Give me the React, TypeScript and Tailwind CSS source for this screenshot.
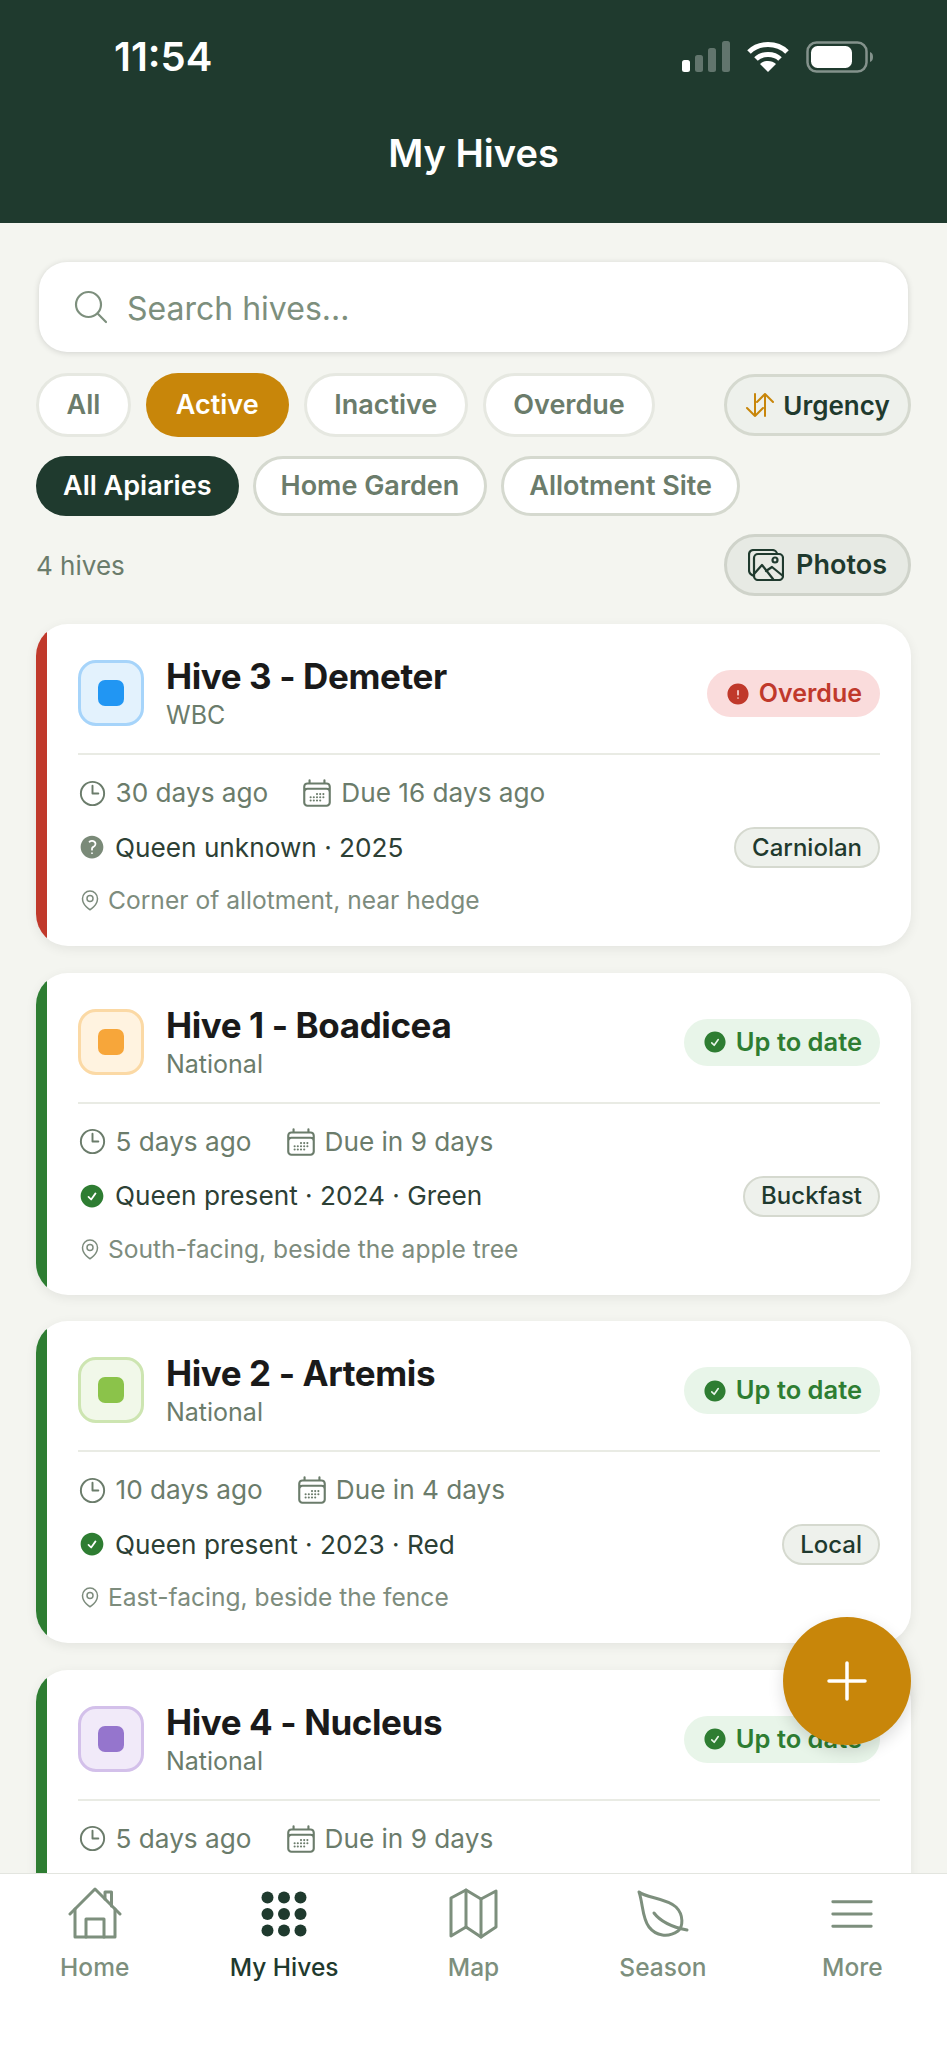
import React from 'react';
import {
  HiOutlineBars3,
  HiOutlineClock,
  HiOutlineCalendarDays,
  HiOutlineMapPin,
  HiOutlineMagnifyingGlass,
  HiCheckCircle,
  HiExclamationCircle,
  HiQuestionMarkCircle,
} from 'react-icons/hi2';

interface Hive {
  name: string;
  type: string;
  stripe: string;
  tileBg: string;
  tileBorder: string;
  tileDot: string;
  overdue: boolean;
  inspected: string;
  due: string;
  queen: string;
  queenKnown: boolean;
  breed: string;
  location: string;
}

const hives: Hive[] = [
  {
    name: 'Hive 3 - Demeter',
    type: 'WBC',
    stripe: 'bg-[#c0392b]',
    tileBg: 'bg-[#e3f2fd]',
    tileBorder: 'border-[#a6d4fa]',
    tileDot: 'bg-[#2196f3]',
    overdue: true,
    inspected: '30 days ago',
    due: 'Due 16 days ago',
    queen: 'Queen unknown · 2025',
    queenKnown: false,
    breed: 'Carniolan',
    location: 'Corner of allotment, near hedge',
  },
  {
    name: 'Hive 1 - Boadicea',
    type: 'National',
    stripe: 'bg-[#2e7d32]',
    tileBg: 'bg-[#fff3e0]',
    tileBorder: 'border-[#fbd9a5]',
    tileDot: 'bg-[#f7a63a]',
    overdue: false,
    inspected: '5 days ago',
    due: 'Due in 9 days',
    queen: 'Queen present · 2024 · Green',
    queenKnown: true,
    breed: 'Buckfast',
    location: 'South-facing, beside the apple tree',
  },
  {
    name: 'Hive 2 - Artemis',
    type: 'National',
    stripe: 'bg-[#2e7d32]',
    tileBg: 'bg-[#f1f8e9]',
    tileBorder: 'border-[#cde5b1]',
    tileDot: 'bg-[#8bc34a]',
    overdue: false,
    inspected: '10 days ago',
    due: 'Due in 4 days',
    queen: 'Queen present · 2023 · Red',
    queenKnown: true,
    breed: 'Local',
    location: 'East-facing, beside the fence',
  },
  {
    name: 'Hive 4 - Nucleus',
    type: 'National',
    stripe: 'bg-[#2e7d32]',
    tileBg: 'bg-[#f1eaf9]',
    tileBorder: 'border-[#d3c0ea]',
    tileDot: 'bg-[#9575cd]',
    overdue: false,
    inspected: '5 days ago',
    due: 'Due in 9 days',
    queen: 'Queen present · 2024',
    queenKnown: true,
    breed: 'Buckfast',
    location: 'Beside the shed',
  },
];

const StatusBar: React.FC = () => (
  <div className="flex items-center justify-between pl-[114px] pr-[72px] pt-[33px] h-[81px]">
    <span className="text-[40px] font-semibold text-white leading-none">11:54</span>
    <div className="flex items-center gap-[17px]">
      <svg width="48" height="32" viewBox="0 0 48 32" fill="white">
        <rect x="0" y="19" width="8" height="12" rx="2.5" />
        <rect x="13" y="14" width="8" height="17" rx="2.5" opacity="0.3" />
        <rect x="26" y="7" width="8" height="24" rx="2.5" opacity="0.3" />
        <rect x="40" y="0" width="8" height="31" rx="2.5" opacity="0.3" />
      </svg>
      <svg width="42" height="32" viewBox="0 0 42 32" fill="none" stroke="white" strokeWidth="5">
        <path d="M2 11 C12 1 30 1 40 11" />
        <path d="M9 18 C15 12 27 12 33 18" />
        <path d="M21 31 L13 23 C17 19 25 19 29 23 Z" fill="white" stroke="none" />
      </svg>
      <svg width="69" height="32" viewBox="0 0 69 32" fill="none">
        <rect x="1.5" y="1.5" width="59" height="29" rx="9" stroke="white" strokeOpacity="0.45" strokeWidth="2.5" />
        <rect x="5" y="5" width="41" height="22" rx="6.5" fill="white" />
        <path d="M64 11 C68 12 68 20 64 21 Z" fill="white" fillOpacity="0.45" />
      </svg>
    </div>
  </div>
);

const Chip: React.FC<{ label: string; className: string }> = ({ label, className }) => (
  <div className={'flex items-center justify-center pt-[1px] rounded-full font-semibold text-[27px] ' + className}>
    {label}
  </div>
);

const plainChip = 'px-[27.5px] bg-white border-[3px] border-[#e6e8e1] text-[#6b7c6b]';
const apiaryChip = 'px-[25px] bg-white border-[3px] border-[#d5d9cf] text-[#6b7c6b]';

const SideButton: React.FC<{ icon: React.ReactNode; label: string; className: string }> = ({ icon, label, className }) => (
  <div className={'flex items-center justify-center w-[187px] rounded-full border-[3px] font-semibold text-[#1f3a2e] ' + className}>
    {icon}
    {label}
  </div>
);

const StatusBadge: React.FC<{ overdue: boolean }> = ({ overdue }) =>
  overdue ? (
    <div className="flex items-center gap-[8px] h-[47px] px-[18px] rounded-full bg-[#fadcdc] text-[#c0392b] text-[25px] font-semibold">
      <HiExclamationCircle className="w-[26px] h-[26px]" />
      Overdue
    </div>
  ) : (
    <div className="flex items-center gap-[8px] h-[47px] px-[18px] rounded-full bg-[#e8f5e9] text-[#2e7d32] text-[25.5px] font-semibold">
      <HiCheckCircle className="w-[26px] h-[26px]" />
      Up to date
    </div>
  );

const HiveCard: React.FC<{ hive: Hive }> = ({ hive }) => (
  <div className="flex shrink-0 h-[322px] rounded-[32px] overflow-hidden bg-white shadow-[0_3px_12px_rgba(0,0,0,0.07)]">
    <div className={'w-[11px] shrink-0 ' + hive.stripe} />
    <div className="flex-1 flex flex-col px-[31px] pt-[36px]">
      <div className="flex items-start h-[65px]">
        <div className={'flex items-center justify-center w-[66px] h-[66px] rounded-[18px] border-[3.5px] ' + hive.tileBg + ' ' + hive.tileBorder}>
          <div className={'w-[26px] h-[26px] rounded-[7px] ' + hive.tileDot} />
        </div>
        <div className="ml-[22px] flex-1 -mt-[5px]">
          <div className="text-[35px] leading-[42px] font-bold tracking-[-0.4px] text-[#1a1a1a]">{hive.name}</div>
          <div className="mt-[3px] text-[25px] leading-[30px] text-[#6b7c6b]">{hive.type}</div>
        </div>
        <div className="mt-[10px]">
          <StatusBadge overdue={hive.overdue} />
        </div>
      </div>
      <div className="h-[2px] bg-[#e9ebe4] mt-[28px]" />
      <div className="flex items-center h-[36px] mt-[20px] text-[26.2px] text-[#6b7c6b]">
        <HiOutlineClock className="w-[31px] h-[31px] text-[#6b7c6b] -ml-[1.5px] mr-[8px]" />
        <span>{hive.inspected}</span>
        <HiOutlineCalendarDays className="w-[34px] h-[34px] text-[#6b7c6b] ml-[32px] mr-[7px]" />
        <span>{hive.due}</span>
      </div>
      <div className="flex items-center justify-between h-[41px] mt-[16px]">
        <div className="flex items-center text-[26.2px] text-[#2d4035]">
          {hive.queenKnown ? (
            <HiCheckCircle className="w-[28px] h-[28px] text-[#2e7d32] mr-[9px]" />
          ) : (
            <HiQuestionMarkCircle className="w-[28px] h-[28px] text-[#7a8a78] mr-[9px]" />
          )}
          {hive.queen}
        </div>
        <div className="flex items-center h-[41px] px-[16px] rounded-full bg-[#eef1ec] border-[2px] border-[#d5d9cf] text-[24px] font-medium text-[#1f3a2e]">
          {hive.breed}
        </div>
      </div>
      <div className="flex items-center mt-[14px] text-[24.6px] text-[#7d8c7d]">
        <HiOutlineMapPin className="w-[24px] h-[24px] mr-[6px]" />
        {hive.location}
      </div>
    </div>
  </div>
);

const SortIcon: React.FC = () => (
  <svg width="30" height="24" viewBox="0 0 30 24" fill="none" stroke="#c8860a" strokeWidth="2" strokeLinecap="round" strokeLinejoin="round">
    <path d="M10 1 V23 M2 15 L10 23 L18 15" />
    <path d="M20 23 V1 M12 9 L20 1 L28 9" />
  </svg>
);

const PhotosIcon: React.FC = () => (
  <svg width="36" height="32" viewBox="0 0 36 32" fill="none" stroke="#1f3a2e" strokeWidth="2.2" strokeLinecap="round" strokeLinejoin="round">
    <path d="M6 27 C3 26 1 24 1 21 V6 C1 3 3 1 6 1 H24 C27 1 29 3 29 5" />
    <rect x="6" y="5" width="29" height="26" rx="4" />
    <path d="M6 25 L14 16 L25 30" />
    <path d="M18 22 L24 18 L35 27" />
    <circle cx="27" cy="11" r="2.5" />
  </svg>
);

const HomeIcon: React.FC = () => (
  <svg width="56" height="54" viewBox="0 0 56 54" fill="none" stroke="#7d8f7d" strokeWidth="3" strokeLinecap="round" strokeLinejoin="round">
    <path d="M3 27 L28 2 L53 27" />
    <path d="M8 22 V50 H48 V22" />
    <path d="M19 50 V32 H37 V50" />
    <path d="M38 12 V5 H44.5 V19" />
  </svg>
);

const HivesDots: React.FC = () => (
  <svg width="46" height="46" viewBox="0 0 46 46" fill="#1f3a2e">
    {[6.5, 23, 39.5].map(y =>
      [6.5, 23, 39.5].map(x => <circle key={x + '-' + y} cx={x} cy={y} r="6" />)
    )}
  </svg>
);

const MapIcon: React.FC = () => (
  <svg width="54" height="54" viewBox="0 0 54 54" fill="none" stroke="#7d8f7d" strokeWidth="3" strokeLinecap="round" strokeLinejoin="round">
    <path d="M4 11 L19 3 L34 12 L49 4 V40 L34 50 L19 40 L4 49 Z" />
    <path d="M19 3 V40 M34 12 V50" />
  </svg>
);

const LeafIcon: React.FC = () => (
  <svg width="54" height="50" viewBox="0 0 54 50" fill="none" stroke="#7d8f7d" strokeWidth="3" strokeLinecap="round" strokeLinejoin="round">
    <path d="M3 3 C10 9 30 9 40 18 C48 26 47 38 42 42 C32 49 20 47 13 38 C6 29 7 14 3 3 Z" />
    <path d="M18 24 C24 32 36 38 51 41" />
  </svg>
);

const NavItem: React.FC<{ label: string; active?: boolean; icon: React.ReactNode }> = ({ label, active, icon }) => (
  <div className="flex-1 flex flex-col items-center">
    <div className="flex items-center justify-center h-[56px]">{icon}</div>
    <span className={'mt-[10px] text-[24.5px] leading-[30px] font-medium ' + (active ? 'text-[#1f3a2e]' : 'text-[#7d8f7d]')}>{label}</span>
  </div>
);

const App: React.FC = () => (
  <div className="relative flex flex-col w-[947px] h-[2048px] overflow-hidden bg-[#f4f5f0] font-['Inter',sans-serif]">
    <header className="shrink-0 h-[223px] bg-[#1f3a2e]">
      <StatusBar />
      <div className="mt-[49px] text-center text-[38px] leading-[46px] font-semibold text-white">My Hives</div>
    </header>

    <main className="flex-1 min-h-0 overflow-hidden px-[36px]">
      <div className="flex items-center h-[90px] mt-[39px] mx-[3px] px-[32px] rounded-[28px] bg-white shadow-[0_1px_6px_rgba(0,0,0,0.14)]">
        <HiOutlineMagnifyingGlass className="w-[40px] h-[40px] text-[#7d8f7d]" strokeWidth={1.3} />
        <span className="ml-[16px] pt-[4px] text-[32px] text-[#7d8f7d]">Search hives...</span>
      </div>

      <div className="flex items-stretch gap-[15px] h-[64px] mt-[21px]">
        <Chip label="All" className={plainChip} />
        <Chip label="Active" className="px-[30px] bg-[#c8860a] text-white" />
        <Chip label="Inactive" className={plainChip} />
        <Chip label="Overdue" className={plainChip} />
        <SideButton
          className="ml-auto self-center h-[62px] gap-[8px] text-[26px] bg-[#eef1ec] border-[#d5d9cf]"
          icon={<SortIcon />}
          label="Urgency"
        />
      </div>

      <div className="flex gap-[14px] h-[60px] mt-[19px]">
        <Chip label="All Apiaries" className="px-[27px] bg-[#1f3a2e] text-white" />
        <Chip label="Home Garden" className={apiaryChip} />
        <Chip label="Allotment Site" className={apiaryChip} />
      </div>

      <div className="flex items-center justify-between h-[62px] mt-[18px]">
        <span className="text-[26px] text-[#6b7c6b]">4 hives</span>
        <SideButton
          className="h-[62px] gap-[12px] text-[27px] bg-[#e7eae4] border-[#cfd3ca]"
          icon={<PhotosIcon />}
          label="Photos"
        />
      </div>

      <div className="flex flex-col gap-[26.5px] mt-[28px]">
        {hives.map(hive => (
          <HiveCard key={hive.name} hive={hive} />
        ))}
      </div>
    </main>

    <nav className="shrink-0 flex h-[175px] pt-[12px] bg-white border-t border-[#e3e5df]">
      <NavItem label="Home" icon={<HomeIcon />} />
      <NavItem label="My Hives" active icon={<HivesDots />} />
      <NavItem label="Map" icon={<MapIcon />} />
      <NavItem label="Season" icon={<LeafIcon />} />
      <NavItem label="More" icon={<HiOutlineBars3 className="w-[56px] h-[56px] text-[#7d8f7d]" strokeWidth={1.2} />} />
    </nav>

    <button className="absolute left-[783px] top-[1617px] flex items-center justify-center w-[128px] h-[128px] rounded-full bg-[#c8860a] shadow-[0_6px_16px_rgba(0,0,0,0.14)]">
      <svg width="40" height="40" viewBox="0 0 40 40" stroke="white" strokeWidth="3.5" strokeLinecap="round">
        <path d="M20 2 V38 M2 20 H38" />
      </svg>
    </button>
  </div>
);

export default App;
